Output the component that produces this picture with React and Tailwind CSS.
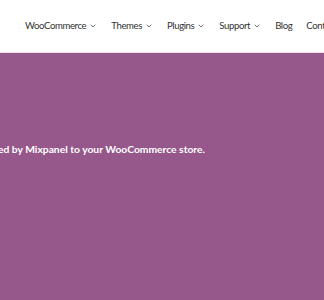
import { ChevronDown } from "lucide-react";

const nav = [
  { label: "WooCommerce", menu: true },
  { label: "Themes", menu: true },
  { label: "Plugins", menu: true },
  { label: "Support", menu: true },
  { label: "Blog" },
  { label: "Contact" },
];

export default function App() {
  return (
    <div className="w-[324px] h-[300px] overflow-hidden bg-[#96588a]" style={{ fontFamily: "Lato, 'Open Sans', sans-serif" }}>
      <header className="h-[53px] bg-white flex items-center pl-[25px] border-b border-[#e9dde6] overflow-hidden">
        <nav className="flex items-center gap-[14px] whitespace-nowrap text-[9.6px] tracking-[-0.4px] text-[#333]">
          {nav.map((item) => (
            <span key={item.label} className="flex items-center gap-[3px] shrink-0">
              {item.label}
              {item.menu && <ChevronDown className="w-[8px] h-[8px] text-[#555]" strokeWidth={2.5} />}
            </span>
          ))}
        </nav>
      </header>
      <section className="flex justify-end w-[205px] pt-[91px]">
        <p className="shrink-0 whitespace-nowrap text-white font-bold text-[10.3px] leading-none">
          Add analytics powered by Mixpanel to your WooCommerce store.
        </p>
      </section>
    </div>
  );
}
